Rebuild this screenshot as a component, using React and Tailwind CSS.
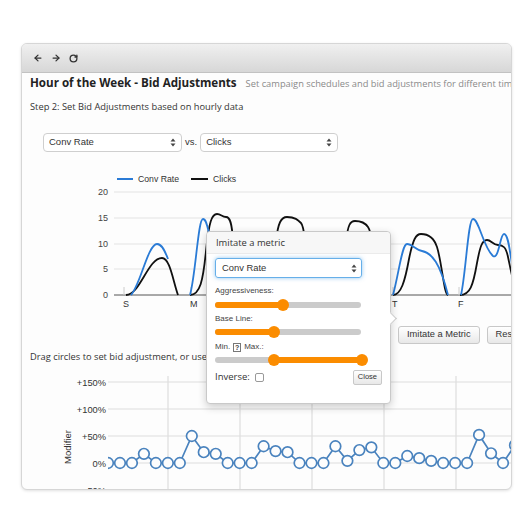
import React from 'react';
import { ArrowLeft, ArrowRight, RotateCw } from 'lucide-react';

const blue = '#2a7bd6';
const dot = '#4a83be';

// bottom chart values per hour slot (percent)
const modifiers = [
  0, 0, 0, 17, 0, 0, 0, 50, 20, 17, 0, 0, 0, 31, 22, 20, 0, 0, 0, 31, 4, 24, 29, 0, 0, 13, 9, 4, 0, 0, 0,
  52, 18, 0, 33,
];

const SelectArrows = () => (
  <svg width="6" height="9" viewBox="0 0 6 9">
    <path d="M3 0.5 L5.5 3.5 L0.5 3.5 Z" fill="#444" />
    <path d="M3 8.5 L5.5 5.5 L0.5 5.5 Z" fill="#444" />
  </svg>
);

const Select = ({ label, className }) => (
  <div
    className={`h-[19px] bg-white border border-[#cfcfcf] rounded-[4px] flex items-center justify-between pl-[5px] pr-[5px] text-[9.5px] text-[#333] font-['Liberation_Sans',Arial,sans-serif] ${className}`}
  >
    <span>{label}</span>
    <SelectArrows />
  </div>
);

const Slider = ({ fill, handles }) => (
  <div className="relative w-[146px] h-[12px]">
    <div className="absolute top-[3px] left-0 w-full h-[6px] rounded-full bg-[#cbcbcb]"></div>
    <div
      className="absolute top-[3px] h-[6px] rounded-full bg-[#fb8c00]"
      style={{ left: fill[0], width: fill[1] - fill[0] }}
    ></div>
    {handles.map((h, i) => (
      <div
        key={i}
        className="absolute top-0 w-[12px] h-[12px] rounded-full bg-[#fb8c00]"
        style={{ left: h - 6 }}
      ></div>
    ))}
  </div>
);

const TopChart = () => {
  const grid = [
    { v: 20, y: 191 },
    { v: 15, y: 217 },
    { v: 10, y: 243 },
    { v: 5, y: 268 },
    { v: 0, y: 294 },
  ];
  const days = [
    ['S', 123],
    ['M', 190],
    ['T', 257],
    ['W', 324],
    ['T', 392],
    ['F', 458],
  ];
  return (
    <svg width="482" height="150" className="block">
      <g transform="translate(-30,-160)" fontFamily="'Liberation Sans', Arial, sans-serif">
        {/* legend */}
        <line x1="117" y1="178" x2="133" y2="178" stroke={blue} strokeWidth="2" />
        <text x="138" y="181" fontSize="8.7" fill="#333">
          Conv Rate
        </text>
        <line x1="191" y1="178" x2="208" y2="178" stroke="#111" strokeWidth="2" />
        <text x="213" y="181" fontSize="8.7" fill="#333">
          Clicks
        </text>

        {grid.map(g => (
          <g key={g.v}>
            <line
              x1="114"
              x2="520"
              y1={g.y}
              y2={g.y}
              stroke={g.v === 0 ? '#555' : '#e3e3e3'}
              strokeWidth={g.v === 0 ? 1 : 1.2}
            />
            <text x="108" y={g.y + 3.2} fontSize="9" fill="#444" textAnchor="end">
              {g.v}
            </text>
          </g>
        ))}
        {days.map(([d, x], i) => (
          <g key={i}>
            <line x1={x + 1} x2={x + 1} y1="286" y2="294" stroke="#ccc" />
            <text x={x} y="306" fontSize="9" fill="#333">
              {d}
            </text>
          </g>
        ))}

        {/* clicks */}
        <g fill="none" stroke="#111" strokeWidth="1.8">
          <path d="M126,294 C140,294 148,257 162,257 C170,257 173,280 178,294" />
          <path d="M190,294 C200,294 203,280 206,250 C209,220 212,213 217,213 C221,213 222,216 226,216 C230,216 232,222 233,240" />
          <path d="M276,240 C278,222 281,216 287,216 C295,216 298,219 301,222 C303,224 304,230 305,240" />
          <path d="M346,240 C348,224 350,220 355,220 C362,220 366,223 368,226 C370,229 371,234 372,240" />
          <path d="M393,294 C401,294 405,280 409,258 C413,238 416,233 421,233 C429,233 434,237 437,246 C442,262 444,294 448,294" />
          <path d="M460,294 C470,294 473,285 477,262 C480,246 482,239 487,239 C491,239 493,244 498,244 C503,244 506,246 508,256 C510,265 511,272 514,282" />
        </g>
        {/* conv rate */}
        <g fill="none" stroke={blue} strokeWidth="1.8">
          <path d="M131,294 C140,285 148,243 157,243 C162,243 165,250 168,258" />
          <path d="M190,294 C196,272 198,218 203,218 C206,218 207,224 209,232" />
          <path d="M393,294 C399,272 402,243 407,243 C412,243 416,249 422,250 C432,252 440,262 448,294" />
          <path d="M461,294 C466,272 468,218 473,218 C479,218 483,246 493,255 C499,259 500,233 504,233 C509,233 510,255 514,275" />
        </g>
      </g>
    </svg>
  );
};

const BottomChart = () => {
  const rows = [
    ['+150%', 383],
    ['+100%', 410],
    ['+50%', 437],
    ['0%', 464],
    ['-50%', 491],
  ];
  const pts = modifiers.map((v, i) => [108 + 11.97 * i, 464 - v * 0.54]);
  return (
    <svg width="482" height="130" className="block">
      <defs>
        <clipPath id="plot">
          <rect x="108" y="370" width="420" height="140" />
        </clipPath>
      </defs>
      <g transform="translate(-30,-366)" fontFamily="'Liberation Sans', Arial, sans-serif">
        {rows.map(([l, y]) => (
          <g key={l}>
            <line x1="108" x2="520" y1={y} y2={y} stroke="#dedede" strokeWidth="1.2" />
            <text x="106" y={y + 3.5} fontSize="9.3" fill="#333" textAnchor="end">
              {l}
            </text>
          </g>
        ))}
        {[168, 240, 312, 384, 456].map(x => (
          <line key={x} x1={x} x2={x} y1="377" y2="500" stroke="#dedede" strokeWidth="1.2" />
        ))}
        <text
          x="0"
          y="0"
          fontSize="9.5"
          fill="#333"
          textAnchor="middle"
          transform="translate(71,448) rotate(-90)"
        >
          Modifier
        </text>
        <g clipPath="url(#plot)">
          <polyline
            points={pts.map(p => p.join(',')).join(' ')}
            fill="none"
            stroke={dot}
            strokeWidth="1.7"
          />
          {pts.map((p, i) => (
            <circle key={i} cx={p[0]} cy={p[1]} r="5.3" fill="#fdfdfd" stroke={dot} strokeWidth="1.7" />
          ))}
        </g>
      </g>
    </svg>
  );
};

const App = () => {
  return (
    <div className="w-[532px] h-[532px] bg-white pt-[43px] pl-[21px] font-['Open_Sans',sans-serif]">
      <div className="relative w-[491px] h-[447px] border border-[#d6d6d6] rounded-[6px] overflow-hidden bg-[#fdfdfd] shadow-[0_1px_3px_rgba(0,0,0,0.12)]">
        {/* title bar */}
        <div className="h-[29px] bg-gradient-to-b from-[#f0f0f0] to-[#d7d7d7] border-b border-[#c2c2c2] flex items-center gap-[8px] pl-[11px] text-[#333]">
          <ArrowLeft size={10} strokeWidth={3} />
          <ArrowRight size={10} strokeWidth={3} />
          <RotateCw size={9} strokeWidth={3.5} />
        </div>

        <div className="pl-[8px]">
          <div className="h-[20px] flex items-baseline whitespace-nowrap leading-[20px]">
            <span className="text-[11.6px] font-bold text-[#222]">Hour of the Week - Bid Adjustments</span>
            <span className="ml-[9px] text-[9.3px] text-[#8a8a8a]">
              Set campaign schedules and bid adjustments for different time slots
            </span>
          </div>
          <p className="mt-[6px] h-[16px] leading-[16px] text-[9.3px] text-[#333]">
            Step 2: Set Bid Adjustments based on hourly data
          </p>

          <div className="mt-[18px] ml-[13px] flex items-center">
            <Select label="Conv Rate" className="w-[139px]" />
            <span className="mx-[3px] text-[9.5px] text-[#333] font-['Liberation_Sans',Arial,sans-serif]">vs.</span>
            <Select label="Clicks" className="w-[138px]" />
          </div>

          <div className="mt-[9px]">
            <TopChart />
          </div>

          <div className="mt-[15px] ml-[368px] flex gap-[7px] whitespace-nowrap font-['Liberation_Sans',Arial,sans-serif]">
            <button className="h-[18px] px-[8px] border border-[#c8c8c8] rounded-[3px] bg-gradient-to-b from-white to-[#e8e8e8] text-[9.3px] text-[#333]">
              Imitate a Metric
            </button>
            <button className="h-[18px] px-[8px] border border-[#c8c8c8] rounded-[3px] bg-gradient-to-b from-white to-[#e8e8e8] text-[9.3px] text-[#333]">
              Reset
            </button>
          </div>

          <p className="mt-[5px] h-[16px] leading-[16px] text-[9.3px] text-[#333] whitespace-nowrap">
            Drag circles to set bid adjustment, or use
          </p>

          <BottomChart />
        </div>

        {/* imitate metric popover */}
        <div className="absolute left-[184px] top-[187px] w-[185px] h-[173px] bg-white border border-[#c9c9c9] rounded-[4px] shadow-[0_3px_8px_rgba(0,0,0,0.2)]">
          <div className="absolute right-[-5px] top-[82px] w-[9px] h-[9px] bg-white border-t border-r border-[#c9c9c9] rotate-45"></div>
          <div className="h-[22px] bg-[#f7f7f7] border-b border-[#ebebeb] rounded-t-[4px] pl-[9px] text-[9.4px] leading-[22px] text-[#333]">
            Imitate a metric
          </div>
          <div className="px-[8px] pt-[4px]">
            <div className="w-[147px] h-[20px] border border-[#66afe9] rounded-[3px] shadow-[0_0_4px_rgba(102,175,233,0.7)] flex items-center justify-between pl-[6px] pr-[4px] text-[9.4px] text-[#333] font-['Liberation_Sans',Arial,sans-serif]">
              <span>Conv Rate</span>
              <SelectArrows />
            </div>
            <div className="mt-[7px] h-[12px] leading-[12px] text-[8px] text-[#444] font-['Liberation_Sans',Arial,sans-serif]">
              Aggressiveness:
            </div>
            <div className="mt-[2px]">
              <Slider fill={[0, 68]} handles={[68]} />
            </div>
            <div className="mt-[2px] h-[12px] leading-[12px] text-[8px] text-[#444] font-['Liberation_Sans',Arial,sans-serif]">
              Base Line:
            </div>
            <div className="mt-[1px]">
              <Slider fill={[0, 59]} handles={[59]} />
            </div>
            <div className="mt-[3px] h-[12px] flex items-center gap-[3px] text-[8px] text-[#444] font-['Liberation_Sans',Arial,sans-serif]">
              <span>Min.</span>
              <span className="w-[8px] h-[9px] border border-[#777] text-[7px] leading-[7px] flex items-center justify-center font-bold">
                ?
              </span>
              <span>Max.:</span>
            </div>
            <div className="mt-[1px]">
              <Slider fill={[59, 147]} handles={[59, 147]} />
            </div>
            <div className="mt-[3px] h-[16px] flex items-center justify-between">
              <div className="flex items-center gap-[5px] text-[9.5px] text-[#333]">
                <span>Inverse:</span>
                <span className="w-[9px] h-[9px] border border-[#999] rounded-[2px] bg-white"></span>
              </div>
              <button className="h-[15px] px-[4px] border border-[#c8c8c8] rounded-[2px] bg-gradient-to-b from-white to-[#e8e8e8] text-[7.5px] text-[#333] font-['Liberation_Sans',Arial,sans-serif]">
                Close
              </button>
            </div>
          </div>
        </div>
      </div>
    </div>
  );
};

export default App;
